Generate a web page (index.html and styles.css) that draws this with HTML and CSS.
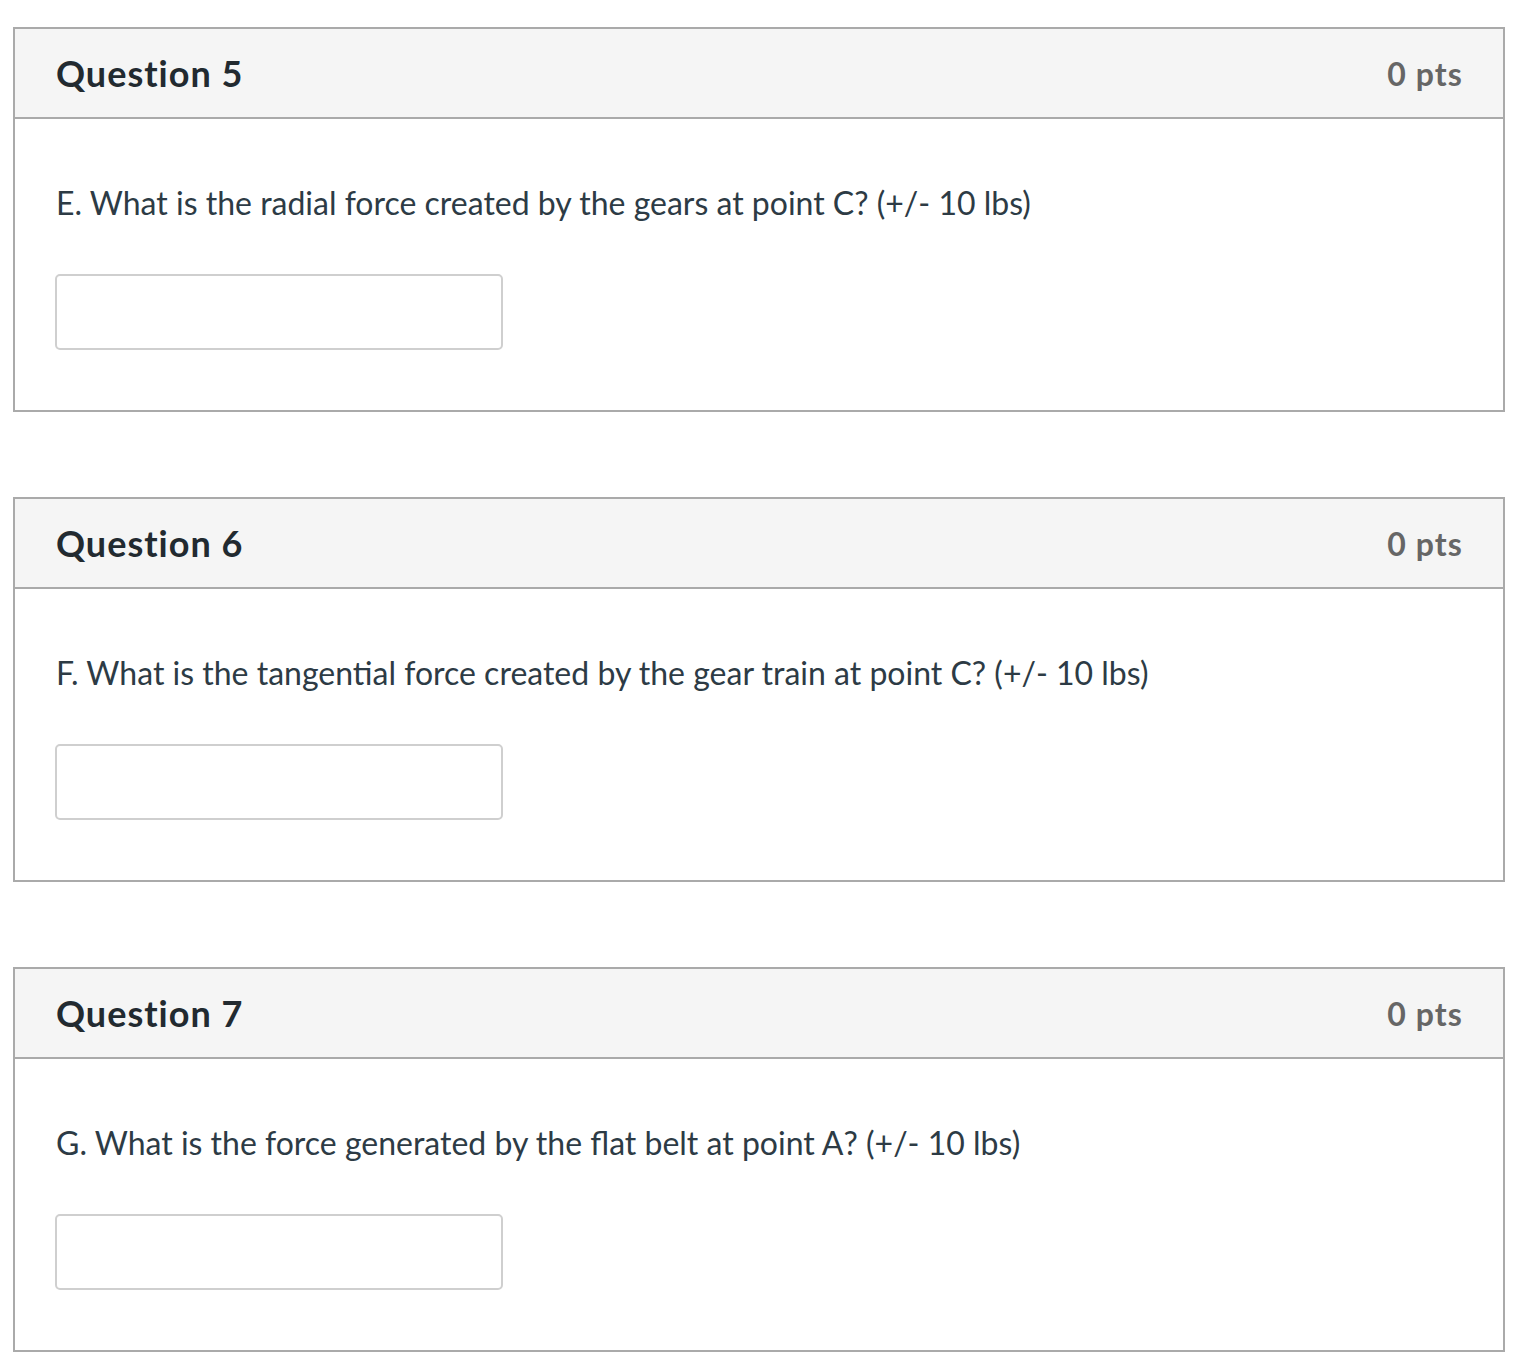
FILE: index.html
```html
<!DOCTYPE html>
<html>
<head>
<meta charset="utf-8">
<link rel="stylesheet" href="styles.css">
</head>
<body>
<div class="page">
  <div class="card">
    <div class="card-header">
      <span class="title">Question 5</span>
      <span class="pts">0 pts</span>
    </div>
    <div class="card-body">
      <p class="qtext">E. What is the radial force created by the gears at point C? (+/- 10 lbs)</p>
      <input class="answer" type="text">
    </div>
  </div>
  <div class="card">
    <div class="card-header">
      <span class="title">Question 6</span>
      <span class="pts">0 pts</span>
    </div>
    <div class="card-body">
      <p class="qtext">F. What is the tangential force created by the gear train at point C? (+/- 10 lbs)</p>
      <input class="answer" type="text">
    </div>
  </div>
  <div class="card">
    <div class="card-header">
      <span class="title">Question 7</span>
      <span class="pts">0 pts</span>
    </div>
    <div class="card-body">
      <p class="qtext">G. What is the force generated by the flat belt at point A? (+/- 10 lbs)</p>
      <input class="answer" type="text">
    </div>
  </div>
</div>
</body>
</html>
```
FILE: styles.css
```css
html, body {
  margin: 0;
  padding: 0;
  background: #ffffff;
}
body {
  font-family: Lato, "Liberation Sans", sans-serif;
  color: #2d3b45;
}
.page {
  display: flex;
  flex-direction: column;
  gap: 85px;
  padding: 27px 31px 0 13px;
}
.card {
  border: 2px solid #aaaaaa;
}
.card-header {
  height: 88px;
  background: #f5f5f5;
  border-bottom: 2px solid #aaaaaa;
  display: flex;
  align-items: center;
  justify-content: space-between;
  padding: 0 41px;
}
.title {
  font-size: 36px;
  font-weight: 700;
  letter-spacing: 1px;
  font-variant-ligatures: common-ligatures;
  color: #222a30;
}
.pts {
  font-size: 32px;
  font-weight: 700;
  letter-spacing: 1.1px;
  margin-right: -1px;
  color: #666666;
}
.card-body {
  padding: 66px 41px 60px;
  display: flex;
  flex-direction: column;
  align-items: flex-start;
}
.qtext {
  margin: 0 0 53px;
  font-size: 32px;
  line-height: 36px;
  color: #2d3b45;
}
.answer {
  box-sizing: border-box;
  width: 448px;
  height: 76px;
  border: 2px solid #cfcfcf;
  border-radius: 5px;
  background: #fff;
  margin: 0 0 0 -1px;
  padding: 0;
}
```
